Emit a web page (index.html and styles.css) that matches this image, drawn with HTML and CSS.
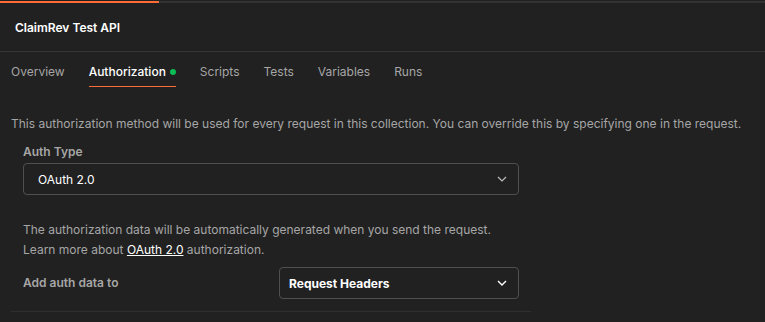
FILE: index.html
```html
<!DOCTYPE html>
<html>
<head>
<meta charset="utf-8">
<link rel="stylesheet" href="styles.css">
</head>
<body>
<div class="progress"><div class="progress-fill" style="width:159px"></div></div>
<header class="header"><h1 class="title">ClaimRev Test API</h1></header>
<nav class="tabs">
  <span class="tab">Overview</span>
  <span class="tab active">Authorization<span class="dot"></span></span>
  <span class="tab">Scripts</span>
  <span class="tab">Tests</span>
  <span class="tab">Variables</span>
  <span class="tab">Runs</span>
</nav>
<main class="content">
  <p class="desc">This authorization method will be used for every request in this collection. You can override this by specifying one in the request.</p>
  <section class="panel">
    <div class="label">Auth Type</div>
    <div class="select wide">
      <span class="select-text">OAuth 2.0</span>
      <svg class="chev" width="10" height="6" viewBox="0 0 10 6"><path d="M1 1l4 4 4-4" fill="none" stroke="#bdbdbd" stroke-width="1.2"/></svg>
    </div>
    <p class="info">The authorization data will be automatically generated when you send the request.<br>Learn more about <a class="link">OAuth 2.0</a> authorization.</p>
    <div class="row">
      <span class="label row-label">Add auth data to</span>
      <div class="select narrow">
        <span class="select-text bold">Request Headers</span>
        <svg class="chev" width="10" height="6" viewBox="0 0 10 6"><path d="M1 1l4 4 4-4" fill="none" stroke="#ffffff" stroke-width="1.4"/></svg>
      </div>
    </div>
  </section>
  <div class="rule"></div>
</main>
</body>
</html>
```
FILE: styles.css
```css
* { box-sizing: border-box; }
html, body { margin: 0; padding: 0; background: #212121; }
body {
  font-family: Inter, "Noto Sans", sans-serif;
  color: #a6a6a6;
  width: 765px;
  height: 322px;
  overflow: hidden;
}
.progress {
  margin-top: 1px;
  height: 2px;
  background: #333333;
}
.progress-fill { height: 2px; background: #ff6c37; }
.header {
  height: 49px;
  display: flex;
  align-items: center;
  padding: 0 15px;
  border-bottom: 1px solid #363636;
}
.title {
  margin: 0;
  font-size: 12px;
  font-weight: 600;
  color: #ffffff;
}
.tabs {
  display: flex;
  gap: 24px;
  padding: 0 11px;
  height: 36px;
  align-items: stretch;
}
.tab {
  display: flex;
  align-items: center;
  font-size: 12px;
  color: #a6a6a6;
  padding-top: 5px;
  border-bottom: 1px solid transparent;
  margin-bottom: 1px;
}
.tab.active {
  color: #ffffff;
  font-weight: 500;
  border-bottom-color: #ff6c37;
}
.dot {
  width: 6px;
  height: 6px;
  border-radius: 50%;
  background: #0cbb52;
  margin-left: 4px;
}
.content { padding: 0 11px; }
.desc {
  margin: 28px 0 0;
  font-size: 12px;
  line-height: 16px;
  color: #a6a6a6;
}
.panel { padding: 0 12px; }
.label {
  font-size: 12px;
  font-weight: 600;
  color: #a6a6a6;
  margin-top: 12px;
  line-height: 16px;
}
.select {
  display: flex;
  align-items: center;
  justify-content: space-between;
  border: 1px solid #4f4f4f;
  border-radius: 4px;
  height: 32px;
}
.wide { width: 496px; margin-top: 3px; padding: 0 11px 0 14px; }
.narrow { width: 240px; padding: 0 11px 0 9px; }
.select-text { font-size: 12px; color: #ffffff; }
.select-text.bold { font-weight: 700; }
.info {
  margin: 25px 0 0;
  font-size: 12px;
  line-height: 20px;
  color: #a6a6a6;
}
.link { color: #ffffff; text-decoration: underline; }
.row {
  display: flex;
  align-items: center;
  margin-top: 7px;
}
.row-label { margin-top: 0; width: 256px; }
.rule {
  height: 1px;
  background: #2f2f2f;
  width: 520px;
  margin-top: 12px;
}
```
